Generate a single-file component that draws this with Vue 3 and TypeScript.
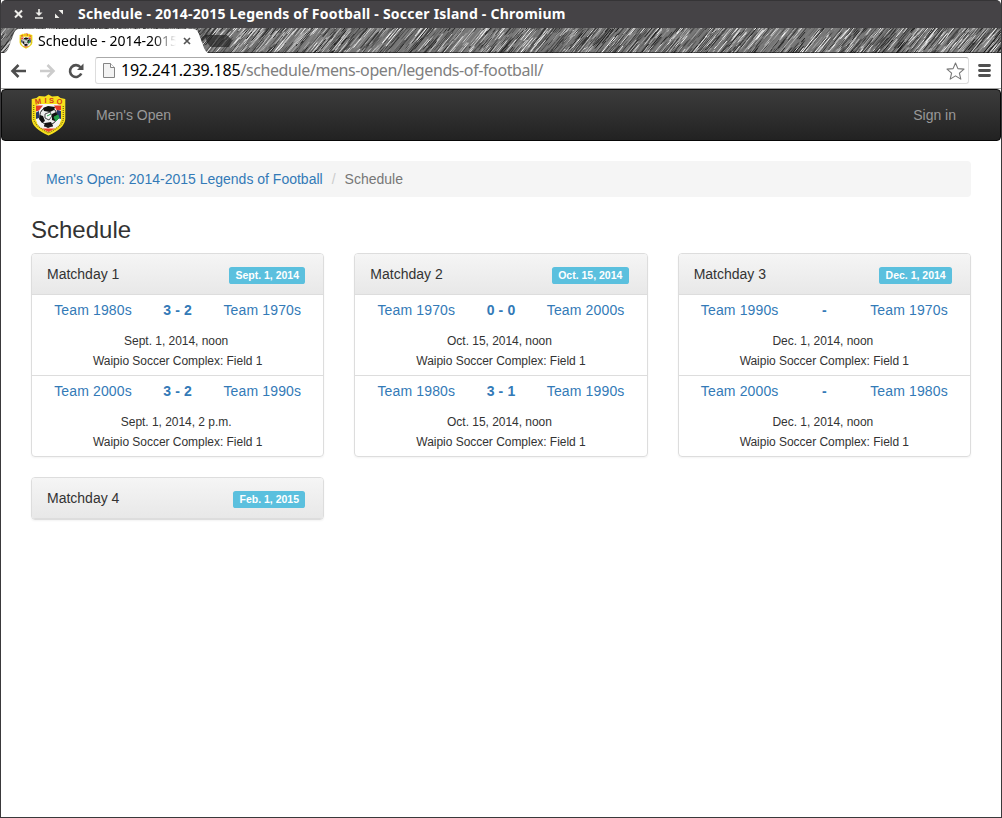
<script setup lang="ts">
interface Match { home: string; away: string; score: string; time: string }
interface Matchday { name: string; date: string; matches: Match[] }
interface Stroke { x1: number; y1: number; x2: number; y2: number; color: string; width: number }

const venue = 'Waipio Soccer Complex: Field 1'

const matchdays: Matchday[] = [
  {
    name: 'Matchday 1',
    date: 'Sept. 1, 2014',
    matches: [
      { home: 'Team 1980s', away: 'Team 1970s', score: '3 - 2', time: 'Sept. 1, 2014, noon' },
      { home: 'Team 2000s', away: 'Team 1990s', score: '3 - 2', time: 'Sept. 1, 2014, 2 p.m.' },
    ],
  },
  {
    name: 'Matchday 2',
    date: 'Oct. 15, 2014',
    matches: [
      { home: 'Team 1970s', away: 'Team 2000s', score: '0 - 0', time: 'Oct. 15, 2014, noon' },
      { home: 'Team 1980s', away: 'Team 1990s', score: '3 - 1', time: 'Oct. 15, 2014, noon' },
    ],
  },
  {
    name: 'Matchday 3',
    date: 'Dec. 1, 2014',
    matches: [
      { home: 'Team 1990s', away: 'Team 1970s', score: '-', time: 'Dec. 1, 2014, noon' },
      { home: 'Team 2000s', away: 'Team 1980s', score: '-', time: 'Dec. 1, 2014, noon' },
    ],
  },
  { name: 'Matchday 4', date: 'Feb. 1, 2015', matches: [] },
]

// Pencil-hatch theme of the tab strip, drawn from a fixed seed.
let seed = 20142015
function random(): number {
  seed = (seed * 1664525 + 1013904223) % 4294967296
  return seed / 4294967296
}
const shades = ['#111', '#fff', '#333', '#bbb', '#444', '#eee', '#222', '#888', '#666']
const strokes: Stroke[] = Array.from({ length: 3200 }, () => {
  const x = random() * 1060 - 40
  const y = random() * 44
  const length = 6 + random() * 16
  return {
    x1: x,
    y1: y,
    x2: x + length * 0.82,
    y2: y - length,
    color: shades[Math.floor(random() * shades.length)],
    width: 0.4 + random() * 0.6,
  }
})
</script>

<template>
  <div class="window">
    <svg width="0" height="0" class="defs">
      <symbol id="crest" viewBox="0 0 35 42">
        <path d="M17.5.5 21 2.500l6-.5 2.500 2L34.300 5v20Q34 34 17.500 41.600 1 34 .7 25.200V5L5.500 4 8 2l6 .5Z" fill="#f8e11c" />
        <path d="M5 11.500 9 10h17l4 1.500V26q-1.500 7-12.500 12Q6.500 33 5 26Z" fill="#f5f5f5" />
        <path d="M5 11.500h7l-4 5-3 1ZM23 11.500h7V16l-4 1Z" fill="#e63a28" />
        <path d="M5 18.500 8 17v7l-3 1ZM26 16l4 1v8l-4-1Z" fill="#26386c" />
        <path d="M6 29h23q-1 3-3.500 4.500H9.500Q7 32 6 29Z" fill="#f2f2f2" />
        <path d="M11 34.500h13l-6.500 3.600Z" fill="#e8442c" />
        <path d="M2.700 11v14q1 7 14.800 14Q31.500 32 32.300 25V11" fill="none" stroke="#7d6f14" stroke-width="1.300" stroke-dasharray="1 1" />
        <g fill="#d03c1c" font-family="Liberation Sans, sans-serif" font-size="7.500" font-weight="bold" text-anchor="middle">
          <text x="7" y="10" transform="rotate(-8 7 8)">M</text>
          <text x="14.500" y="8.800">I</text>
          <text x="20.500" y="8.800">S</text>
          <text x="28.500" y="10" transform="rotate(8 28 8)">O</text>
        </g>
        <circle cx="17.500" cy="22" r="8.800" fill="#eee" stroke="#222" stroke-width="1" />
        <path d="m12 14 5-2 7 1-1 3-4 2-6-1ZM9 21l3 1 2 5-3 2-3-4ZM21 20l4-2 2 4-3 5-3-1ZM14 29l6-1 2 4-5 2-4-2Z" fill="#111" />
        <path d="m14 20 5-2 2 4-3 4-4-2Z" fill="#f8f8f8" stroke="#222" stroke-width=".8" />
        <path d="m16 22 4-2M23 23l4-2 1 3-3 3Z" fill="#22a04a" stroke="#22a04a" />
        <path d="M13 32h9" stroke="#222" />
      </symbol>
    </svg>

    <header class="titlebar">
      <svg class="controls" width="54" height="12" viewBox="0 0 54 12" fill="none" stroke="#f0efeb">
        <path d="m3 2.500 7 7M10 2.500l-7 7" stroke-width="2" />
        <path d="M27 1v5M23 10h8" stroke-width="1.600" />
        <path d="M23.500 4.500h7L27 8Z" fill="#f0efeb" stroke="none" />
        <path d="M46.500 2H51v4.500ZM43 5.500V10h4.500Z" fill="#f0efeb" stroke="none" />
      </svg>
      <span class="window-title">Schedule - 2014-2015 Legends of Football - Soccer Island - Chromium</span>
    </header>

    <div class="tabstrip">
      <svg class="hatch" width="1000" height="25" viewBox="0 0 1000 25">
        <rect width="1000" height="25" fill="#777" />
        <line v-for="(s, i) in strokes" :key="i" :x1="s.x1" :y1="s.y1" :x2="s.x2" :y2="s.y2" :stroke="s.color" :stroke-width="s.width" />
        <path d="M204 7h22l5 5-3 7h-18q-5-4-6-12Z" fill="#222" opacity=".7" />
        <path d="M0 24.500h1000" stroke="#111" opacity=".6" />
        <path d="M3 25q3-1 4.500-5L13 5q1.500-4 5-4h174q4 0 5.500 4l5.500 15q1.500 4 4 5Z" fill="#fff" />
      </svg>
      <div class="tab">
        <svg class="favicon" width="14" height="16"><use href="#crest" /></svg>
        <span class="tab-title">Schedule - 2014-2015</span>
        <svg class="tab-close" width="8" height="8" viewBox="0 0 8 8"><path d="m1 1 6 6M7 1 1 7" stroke="#555" stroke-width="1.700" /></svg>
      </div>
    </div>

    <div class="toolbar">
      <svg class="nav-icons" width="78" height="20" viewBox="0 0 78 20" fill="none" stroke-width="2.600">
        <path d="M17 10H4M9.500 4 3.500 10l6 6" stroke="#4d4d4d" />
        <path d="M31 10h13M38.500 4l6 6-6 6" stroke="#ccc" />
        <path d="M71.500 6.300A5.900 5.900 0 1 0 72.300 12.500" stroke="#505050" />
        <path d="M74.500 2.500V9H68Z" fill="#505050" stroke="none" />
      </svg>
      <div class="omnibox">
        <svg class="page-icon" width="12" height="15" viewBox="0 0 12 15">
          <path d="M.5.500h7l4 4v10H.5Z" fill="#f3f3f3" stroke="#858585" />
          <path d="M7.500.500v4h4" fill="#fff" stroke="#858585" />
        </svg>
        <span class="host">192.241.239.185</span><span class="path">/schedule/mens-open/legends-of-football/</span>
        <svg class="star" width="19" height="18" viewBox="0 0 19 18">
          <path d="m9.500 1 2.400 5.600 6.100.5-4.600 4 1.400 6-5.300-3.200-5.300 3.200 1.400-6-4.600-4 6.100-.5Z" fill="#fff" stroke="#777" stroke-width="1.100" stroke-linejoin="round" />
        </svg>
      </div>
      <svg class="menu" width="14" height="14" viewBox="0 0 14 14"><path d="M2.500 1.500h10M2.500 6.500h10M2.500 11.500h10" stroke="#505050" stroke-width="2.800" stroke-linecap="round" /></svg>
    </div>

    <nav class="navbar">
      <svg class="brand" width="35" height="42"><use href="#crest" /></svg>
      <a class="nav-link">Men's Open</a>
      <a class="nav-link sign-in">Sign in</a>
    </nav>

    <main class="container">
      <ol class="breadcrumb">
        <li><a>Men's Open: 2014-2015 Legends of Football</a></li>
        <li class="separator">/</li>
        <li class="active">Schedule</li>
      </ol>
      <h3>Schedule</h3>
      <div class="panels">
        <section v-for="day in matchdays" :key="day.name" class="panel">
          <div class="panel-heading">
            <span>{{ day.name }}</span>
            <span class="label">{{ day.date }}</span>
          </div>
          <div v-for="match in day.matches" :key="match.home" class="match">
            <div class="teams">
              <a>{{ match.home }}</a>
              <a class="score">{{ match.score }}</a>
              <a>{{ match.away }}</a>
            </div>
            <div class="details">
              <div class="time">{{ match.time }}</div>
              <div>{{ venue }}</div>
            </div>
          </div>
        </section>
      </div>
    </main>
  </div>
</template>

<style>
body { margin: 0; background: #3a393b; }
</style>

<style scoped>
.window {
  box-sizing: border-box;
  width: 1002px;
  height: 818px;
  overflow: hidden;
  border: 1px solid #3a393b;
  border-top: 0;
  background: #fff;
  font: 14px/20px "Liberation Sans", Arial, sans-serif;
  color: #333;
}
.defs { position: absolute; }
.titlebar {
  display: flex;
  align-items: center;
  box-sizing: border-box;
  height: 28px;
  padding: 0 0 1px 11px;
  border-top: 1px solid #353436;
  border-radius: 5px 5px 0 0;
  background: #454346;
}
.controls { flex: none; margin-right: 12px; }
.window-title {
  font: bold 14px/20px "Noto Sans", "Open Sans", sans-serif;
  letter-spacing: .225px;
  color: #fff;
  white-space: nowrap;
}
.tabstrip { position: relative; height: 25px; }
.hatch { display: block; }
.tab {
  position: absolute;
  inset: 0 auto 0 18px;
  display: flex;
  align-items: center;
  width: 175px;
}
.favicon { flex: none; margin-right: 5px; }
.tab-title {
  width: 138px;
  overflow: hidden;
  font: 14px/20px "Noto Sans", "Open Sans", sans-serif;
  color: #000;
  white-space: nowrap;
  mask-image: linear-gradient(to right, #000 115px, transparent 138px);
}
.tab-close { flex: none; margin-left: 7px; }
.toolbar {
  display: flex;
  align-items: center;
  box-sizing: border-box;
  height: 36px;
  padding: 0 10px 0 8px;
  border-bottom: 1px solid #a4a4a4;
  background: #fff;
}
.nav-icons { flex: none; }
.omnibox {
  display: flex;
  align-items: center;
  box-sizing: border-box;
  width: 874px;
  height: 27px;
  margin-left: 8px;
  padding: 0 3px 0 7px;
  border: 1px solid #ddd;
  border-top-color: #aaa;
  border-radius: 3px;
  font: 16px/24px "Noto Sans", "Open Sans", sans-serif;
  white-space: nowrap;
}
.page-icon { flex: none; margin-right: 6px; }
.host, .path { padding-bottom: 2px; }
.host { letter-spacing: -.22px; color: #000; }
.path { letter-spacing: -.4px; color: #808080; }
.star { margin-left: auto; }
.menu { margin-left: auto; }
.navbar {
  display: flex;
  align-items: center;
  box-sizing: border-box;
  height: 52px;
  padding: 0 44px 0 29px;
  border: 1px solid #080808;
  border-radius: 4px;
  background: linear-gradient(#3c3c3c, #222);
}
.brand { margin-right: 30px; }
.sign-in { margin-left: auto; }
.container { padding: 20px 30px 0; }
.breadcrumb {
  display: flex;
  margin: 0 0 20px;
  padding: 8px 15px;
  border-radius: 4px;
  background: #f5f5f5;
  list-style: none;
}
a { color: #337ab7; }
.navbar .nav-link { color: #999; }
.separator { padding: 0 9px; color: #ccc; }
.active { color: #777; }
h3 {
  margin: 0 0 10px;
  font-size: 24px;
  font-weight: 500;
  line-height: 26px;
}
.panels {
  display: grid;
  grid-template-columns: repeat(3, 1fr);
  gap: 20px 30px;
}
.panel {
  overflow: hidden;
  border: 1px solid #ddd;
  border-radius: 4px;
  box-shadow: 0 1px 2px rgba(0, 0, 0, .05);
}
.panel-heading {
  display: flex;
  justify-content: space-between;
  height: 20px;
  padding: 10px 18px 10px 15px;
  border-bottom: 1px solid #ddd;
  background: linear-gradient(#f5f5f5, #e8e8e8);
}
.label {
  height: 17px;
  margin-top: 3px;
  padding: 0 6.3px;
  border-radius: 2.600px;
  background: #5bc0de;
  font-size: 10.5px;
  font-weight: bold;
  line-height: 17px;
  color: #fff;
}
.match {
  box-sizing: border-box;
  height: 80px;
  padding-top: 5px;
}
.match + .match { height: 81px; border-top: 1px solid #ddd; }
.teams {
  display: grid;
  grid-template-columns: repeat(3, 84.67px);
  justify-content: center;
  letter-spacing: .14px;
  text-align: center;
}
.score { font-weight: bold; }
.details {
  margin-top: 11px;
  font-size: 12px;
  letter-spacing: -.03px;
  text-align: center;
}
.time { padding-right: 3px; }
</style>
